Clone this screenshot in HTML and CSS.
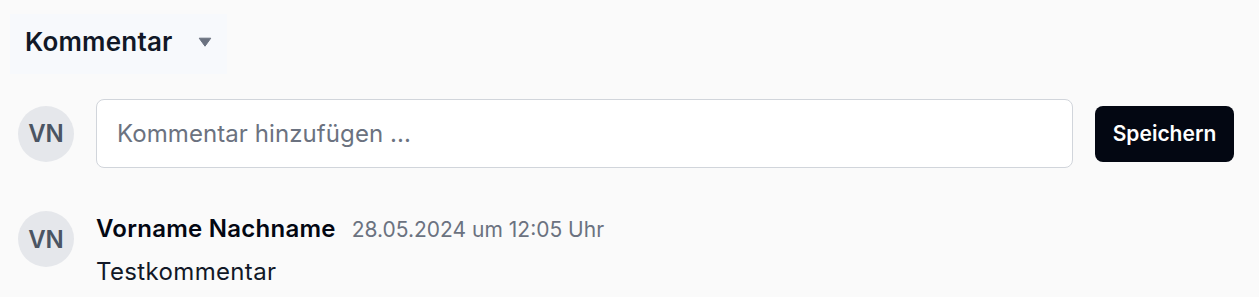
FILE: index.html
```html
<!DOCTYPE html>
<html lang="de">
<head>
<meta charset="utf-8">
<title>Kommentar</title>
<link rel="stylesheet" href="styles.css">
</head>
<body>
<div class="page">
  <div class="tabbar">
    <button class="select" type="button">
      <span class="select-label">Kommentar</span>
      <svg class="caret" width="14" height="10" viewBox="0 0 14 10"><path d="M1.2 1.2h11.6L7 9.2z" fill="#6b7280" stroke="#6b7280" stroke-width="1" stroke-linejoin="round"/></svg>
    </button>
  </div>
  <div class="new-comment">
    <div class="avatar">VN</div>
    <div class="input">Kommentar hinzufügen ...</div>
    <button class="save" type="button">Speichern</button>
  </div>
  <div class="comment">
    <div class="avatar">VN</div>
    <div class="comment-body">
      <div class="comment-head">
        <span class="author">Vorname Nachname</span>
        <span class="date">28.05.2024 um 12:05 Uhr</span>
      </div>
      <div class="comment-text">Testkommentar</div>
    </div>
  </div>
</div>
</body>
</html>
```
FILE: styles.css
```css
* { box-sizing: border-box; }
html, body { margin: 0; padding: 0; }
body {
  background: #fafafa;
  font-family: Inter, "Noto Sans", sans-serif;
  color: #030712;
  width: 1259px;
  height: 297px;
  overflow: hidden;
}
.page {
  padding: 14px 25px 0 18px;
}
.tabbar {
  display: flex;
  margin-left: -8px;
}
.select {
  display: flex;
  align-items: center;
  gap: 25px;
  width: 217px;
  height: 60px;
  padding: 0 14px 5px 15px;
  background: #f7f9fc;
  border: 0;
  font-family: inherit;
  cursor: pointer;
}
.select-label {
  font-size: 26px;
  font-weight: 600;
  letter-spacing: 0.2px;
  color: #111827;
}
.new-comment {
  display: flex;
  align-items: center;
  gap: 22px;
  margin-top: 25px;
}
.avatar {
  flex: none;
  width: 56px;
  height: 56px;
  border-radius: 50%;
  background: #e5e7eb;
  color: #4b5563;
  font-weight: 600;
  font-size: 24px;
  display: flex;
  align-items: center;
  justify-content: center;
}
.input {
  flex: 1;
  height: 69px;
  background: #fff;
  border: 1.5px solid #d1d5db;
  border-radius: 8px;
  padding: 0 20px;
  display: flex;
  align-items: center;
  font-size: 24px;
  letter-spacing: 0.08px;
  color: #6b7280;
}
.save {
  flex: none;
  width: 139px;
  height: 56px;
  background: #030712;
  color: #fff;
  border: 0;
  border-radius: 8px;
  font-family: inherit;
  font-size: 21px;
  font-weight: 600;
}
.comment {
  display: flex;
  gap: 22px;
  margin-top: 43px;
}
.comment-body {
  display: flex;
  flex-direction: column;
  padding-top: 3px;
}
.comment-head {
  display: flex;
  align-items: baseline;
  gap: 16px;
}
.author {
  font-size: 24px;
  font-weight: 600;
  letter-spacing: 0.25px;
  color: #030712;
}
.date {
  font-size: 21px;
  color: #6b7280;
}
.comment-text {
  margin-top: 14px;
  font-size: 24px;
  letter-spacing: 0.35px;
  color: #111827;
}
```
